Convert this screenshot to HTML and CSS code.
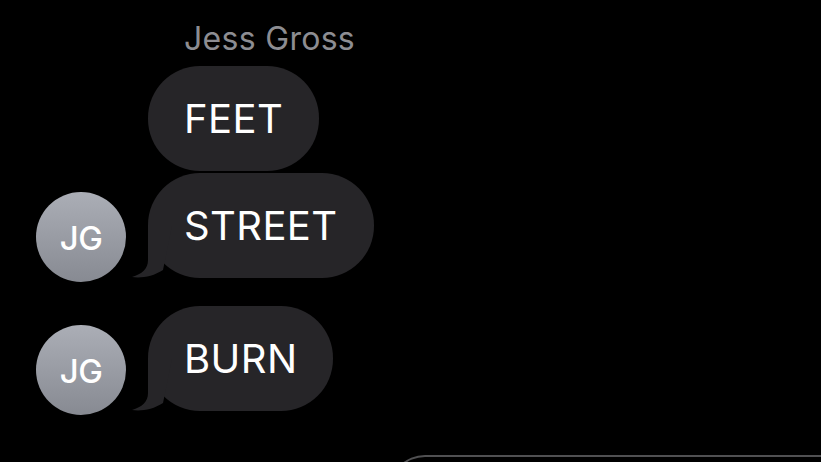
FILE: index.html
```html
<!DOCTYPE html>
<html lang="en">
<head>
    <meta charset="UTF-8">
    <meta name="viewport" content="width=device-width, initial-scale=1.0">
    <title>Messages</title>
    <link rel="stylesheet" href="styles.css">
</head>
<body>
    <div class="thread">
        <div class="sender">Jess Gross</div>

        <div class="row first">
            <div class="avatar-slot"></div>
            <div class="bubble">FEET</div>
        </div>

        <div class="row">
            <div class="avatar">JG</div>
            <div class="bubble tailed">
                STREET
                <svg class="tail" width="40" height="52" viewBox="0 0 40 52">
                    <path d="M16 0 L16 34 C16 43 10 48 0 51 C9 52.5 21 50.5 31 44 L40 0 Z" fill="#262528"/>
                </svg>
            </div>
        </div>

        <div class="row spaced">
            <div class="avatar">JG</div>
            <div class="bubble tailed">
                BURN
                <svg class="tail" width="40" height="52" viewBox="0 0 40 52">
                    <path d="M16 0 L16 34 C16 43 10 48 0 51 C9 52.5 21 50.5 31 44 L40 0 Z" fill="#262528"/>
                </svg>
            </div>
        </div>

        <div class="compose">
            <div class="compose-box"></div>
        </div>
    </div>
</body>
</html>
```

FILE: styles.css
```css
html, body {
    margin: 0;
    padding: 0;
    background: #000;
    height: 100%;
    overflow: hidden;
}

body {
    font-family: Inter, "Liberation Sans", sans-serif;
    color: #fff;
}

.thread {
    padding: 21px 0 0 36px;
}

.sender {
    margin-left: 148px;
    font-size: 32px;
    line-height: 36px;
    color: #8d8d92;
    letter-spacing: 0.3px;
}

.row {
    display: flex;
    align-items: flex-end;
    gap: 22px;
    margin-top: 2px;
}

.row.first {
    margin-top: 9px;
}

.row.spaced {
    margin-top: 24px;
}

.avatar-slot {
    width: 90px;
}

.avatar {
    width: 90px;
    height: 90px;
    border-radius: 50%;
    background: linear-gradient(180deg, #abaeb6, #878a92);
    display: flex;
    align-items: center;
    justify-content: center;
    font-size: 33px;
    font-weight: 500;
    letter-spacing: -0.5px;
    padding-top: 2px;
    box-sizing: border-box;
    flex-shrink: 0;
}

.bubble {
    position: relative;
    background: #262528;
    height: 105px;
    line-height: 105px;
    padding: 0 36px;
    border-radius: 52px;
    font-size: 40px;
    letter-spacing: 0.4px;
}

.bubble.tailed {
    margin-bottom: 4px;
}

.tail {
    position: absolute;
    left: -16px;
    bottom: 0;
}

.compose {
    margin-top: 40px;
    padding-left: 353px;
}

.compose-box {
    height: 60px;
    border: 2px solid #505052;
    border-right: none;
    border-radius: 36px 0 0 0;
}
```
